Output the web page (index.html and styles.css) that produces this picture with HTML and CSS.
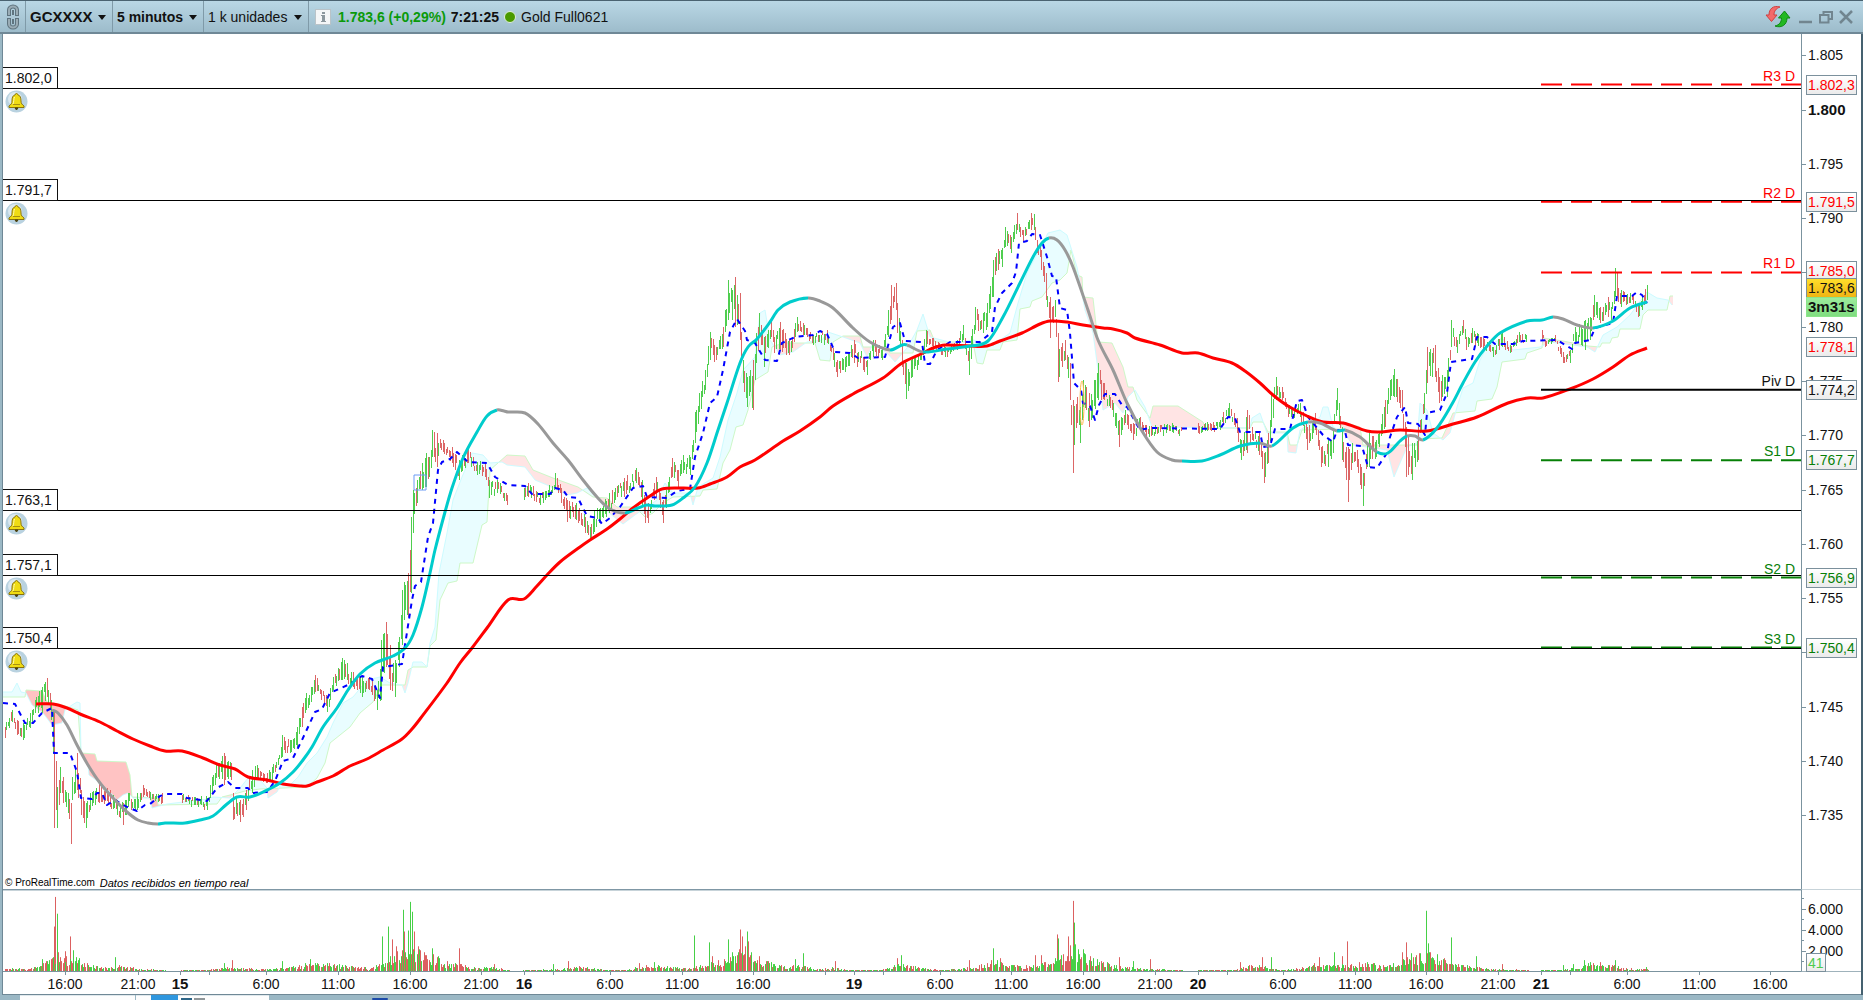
FILE: index.html
```html
<!DOCTYPE html>
<html lang="es">
<head>
    <meta charset="UTF-8">
    <meta name="viewport" content="width=device-width, initial-scale=1.0">
    <title>GCXXXX - 5 minutos</title>
    <link rel="stylesheet" href="styles.css">
</head>
<body>
    <header class="toolbar">
        <button class="link-btn" type="button" aria-label="Vincular ventanas">
            <svg width="14" height="26" viewBox="0 0 14 26" fill="none">
                <path d="M3 12V6a4 3.500 0 0 1 8 0v6M3 14v6a4 3.500 0 0 0 8 0v-6" stroke="#5f747f" stroke-width="4"/>
                <path d="M3 11V6a4 3.500 0 0 1 8 0v5M3 15v5a4 3.500 0 0 0 8 0v-5" stroke="#9aacb5" stroke-width="2"/>
                <path d="M7 6v5M7 15v5" stroke="#5f747f" stroke-width="2"/>
                <path d="M0 13h14" stroke="#abc7d5" stroke-width="2"/>
            </svg>
        </button>
        <div class="picker picker-symbol">
            <select aria-label="Valor"><option>GCXXXX</option></select>
        </div>
        <div class="picker picker-period">
            <select aria-label="Periodo"><option>5 minutos</option></select>
        </div>
        <div class="picker picker-units">
            <select aria-label="Unidades"><option>1 k unidades</option></select>
        </div>
        <button class="info-btn" type="button" aria-label="Información">
            <svg width="16" height="16" viewBox="0 0 16 16">
                <rect x=".5" y=".5" width="15" height="15" fill="#f4f6f7" stroke="#b9c3c8"/>
                <path d="M7 3h3v2H7zM6 6h4v6h1v1H6v-1h1V7H6z" fill="#8b979d"/>
            </svg>
        </button>
        <span class="quote">1.783,6 (+0,29%)</span>
        <span class="clock">7:21:25</span>
        <span class="dot"></span>
        <span class="name">Gold Full0621</span>
        <div class="window-btns">
            <button class="refresh-btn" type="button" aria-label="Actualizar">
                <svg width="26" height="24" viewBox="0 0 26 24">
                    <path d="M15 2C8 0 4 4 4 10H1l5.500 6.500L12 10H9c0-4 2-6.500 6-8z" fill="#f46a6a" stroke="#cf4040"/>
                    <path d="M10 21c7 2.500 12-1.500 12-8h3l-5.500-7-6 7h3c0 4-2 7-6.500 8z" fill="#22b822" stroke="#0f8a12"/>
                </svg>
            </button>
            <button type="button" aria-label="Minimizar">
                <svg width="14" height="14" viewBox="0 0 14 14"><path d="M0 12h13" stroke="#71858f" stroke-width="2.500"/></svg>
            </button>
            <button type="button" aria-label="Restaurar">
                <svg width="14" height="14" viewBox="0 0 14 14" fill="none" stroke="#71858f" stroke-width="2">
                    <path d="M4.500 4V2H13v7h-3"/><path d="M1 5h8.500v7.500H1z"/>
                </svg>
            </button>
            <button type="button" aria-label="Cerrar">
                <svg width="14" height="14" viewBox="0 0 14 14"><path d="M1 1l12 12M13 1L1 13" stroke="#71858f" stroke-width="2.500"/></svg>
            </button>
        </div>
    </header>

    <main class="chart">
        <section class="price-pane" id="pricePane">
            <svg class="plot" id="pricePlot" viewBox="3 34 1798 855" preserveAspectRatio="none"></svg>
            <p class="credit"><span class="brand">© ProRealTime.com</span><i>Datos recibidos en tiempo real</i></p>
        </section>
        <div class="price-axis" id="priceAxis"></div>
        <section class="volume-pane">
            <svg class="plot" id="volumePlot" viewBox="3 890 1798 81" preserveAspectRatio="none"></svg>
        </section>
        <div class="volume-axis" id="volumeAxis"></div>
        <div class="time-axis" id="timeAxis"></div>
        <div class="corner"></div>
    </main>

    <footer class="taskbar">
        <span class="task task-white task-first"></span>
        <span class="task task-white task-small"></span>
        <span class="task task-blue"></span>
        <span class="task task-white task-open"><span class="task-icon"></span><span class="task-icon task-icon-gray"></span></span>
        <span class="task task-dark"></span>
    </footer>

    <script src="chart.js"></script>
</body>
</html>
```
FILE: styles.css
```css
* { box-sizing: border-box; }
body { margin: 0; min-height: 100vh; display: flex; flex-direction: column; font-family: "Liberation Sans", Arial, sans-serif; font-size: 14px; line-height: 16px; color: #111; background: #9bb8c5; }
button { padding: 0; border: none; background: none; cursor: pointer; }
svg { display: block; }

/* toolbar */
.toolbar { display: flex; align-items: center; height: 34px; padding: 0 10px 0 2px; border-top: 1px solid #4a6371; border-bottom: 2px solid #6f8896; background: linear-gradient(#b9d7e5, #9dbccb); white-space: nowrap; }
.toolbar > .link-btn { width: 24px; height: 31px; padding-left: 4px; border-right: 1px solid #7f9aa8; }
.picker { position: relative; height: 31px; border-right: 1px solid #7f9aa8; display: flex; }
.picker select { appearance: none; width: 100%; border: none; background: none; padding: 0 0 0 4px; font-family: inherit; font-size: 14px; color: #111; }
.picker::after { content: ""; position: absolute; right: 6px; top: 14px; border: 4px solid transparent; border-top: 5px solid #111; border-bottom: none; pointer-events: none; }
.picker-symbol { width: 87px; }
.picker-symbol select { font-size: 15px; font-weight: bold; }
.picker-period { width: 91px; }
.picker-period select { font-weight: bold; }
.picker-units { width: 105px; }
.info-btn { margin: 0 7px 0 6px; }
.quote { color: #0a9a0a; font-weight: bold; }
.clock { margin-left: 5px; font-weight: bold; }
.dot { width: 12px; height: 12px; margin: 0 5px; border-radius: 50%; background: #4a9a00; border: 1px solid #e0eedc; }
.window-btns { display: flex; align-items: center; gap: 6px; margin-left: auto; }
.refresh-btn { margin-right: 2px; }

/* chart grid */
.chart { flex: 1; display: grid; grid-template-columns: 1fr 60px; grid-template-rows: 1fr 82px 23px; margin: 0 0 0 2px; border-left: 1px solid #6f8896; border-right: 2px solid #456170; background: #fff; }
.price-pane, .price-axis, .volume-pane, .volume-axis, .time-axis { position: relative; }
.plot { position: absolute; inset: 0; width: 100%; height: 100%; }
.plot path, .plot line, .plot ellipse { vector-effect: non-scaling-stroke; }
.price-pane { border-bottom: 1px solid #7f97a5; }
.price-axis { border-bottom: 1px solid #c7d3d9; border-left: 1px solid #7b939f; }
.volume-pane { border-top: 1px solid #c7d3d9; border-bottom: 1px solid #7b939f; }
.volume-axis { border-left: 1px solid #7b939f; border-bottom: 1px solid #9fb2bb; }
.time-axis { border-bottom: 1px solid #6f8896; }
.corner { border-bottom: 1px solid #6f8896; }
.credit { display: flex; gap: 5px; position: absolute; left: 2px; bottom: 0; margin: 0; font-size: 11px; line-height: 12px; color: #000; }
.credit .brand { font-size: 10px; }

/* alerts and pivots lying over the plot */
.alert { position: absolute; left: 0; width: 100%; border-top: 1px solid #000; }
.alert-price { position: absolute; left: 0; bottom: 0; height: 22px; padding: 2px 5px 0 2px; border: 1px solid #111; border-left: none; background: #fff; }
.alert-bell { position: absolute; left: 2px; top: 1px; }
.pivot-name { position: absolute; right: 6px; padding-bottom: 1px; transform: translateY(-100%); }

/* axes */
.tick { position: absolute; left: 0; width: 4px; border-top: 1px solid #7b939f; }
.tick-minor { width: 2px; }
.tick-label { position: absolute; left: 6px; padding-bottom: 1px; transform: translateY(-50%); }
.tick-strong { font-size: 15px; font-weight: bold; }
.tag { position: absolute; left: 4px; height: 20px; padding: 1px 1px 0 1px; border: 1px solid #7b909c; background: linear-gradient(#fff, #ebebeb); transform: translateY(-50%); }
.tag-volume { height: 19px; top: 63px; color: #4fcb4f; transform: none; }
.red { color: #ff0000; }
.green { color: #078007; }
.dark { color: #111; }
.tag-last { background: linear-gradient(#ffdf2a, #f0b414); }
.tag-timer { border-color: #8be58b; background: linear-gradient(#9cec9c, #80dd80); font-size: 15px; font-weight: bold; }
.time-tick { position: absolute; top: 0; height: 3px; border-left: 1px solid #7b939f; }
.time-label { position: absolute; top: 4px; transform: translateX(-50%); }

/* strip of the desktop bar under the window */
.taskbar { display: flex; height: 5px; background: #9bb8c5; }
.task { height: 5px; }
.task-white { background: #fdfdfd; border-top: 1px solid #dfe8ec; }
.task-first { width: 115px; margin-left: 20px; }
.task-small { width: 15px; margin-left: 1px; }
.task-blue { width: 27px; background: #2f97df; }
.task-open { display: flex; gap: 2px; width: 91px; padding: 2px 0 0 3px; }
.task-icon { width: 11px; background: #2c6587; }
.task-icon-gray { background: #8f9699; }
.task-dark { width: 16px; height: 2px; margin: 3px 0 0 103px; background: #1c4aa8; border-radius: 4px; }
```
FILE: chart.js
```javascript
const NS = "http://www.w3.org/2000/svg";
const VIEW = { x: 3, y: 34, w: 1798, h: 855 };
const pricePlot = document.getElementById("pricePlot");
const volumePlot = document.getElementById("volumePlot");
const pricePane = document.getElementById("pricePane");
const priceAxis = document.getElementById("priceAxis");
const volumeAxis = document.getElementById("volumeAxis");
const timeAxis = document.getElementById("timeAxis");

const priceY = p => 55.3 + (1805 - p) * 10.857;
const topPct = y => ((y - VIEW.y) / VIEW.h * 100) + "%";
const leftPct = x => ((x - VIEW.x) / VIEW.w * 100) + "%";
const points = s => s.trim().split(/\s+/).map(p => p.split(",").map(Number));

// repeatable noise so the chart is the same on each load
let seed = 20210421;
function rnd() {
    seed = (seed * 1664525 + 1013904223) % 4294967296;
    return seed / 4294967296;
}

function add(parent, name, attrs) {
    const el = document.createElementNS(NS, name);
    for (const k in attrs) el.setAttribute(k, attrs[k]);
    parent.appendChild(el);
    return el;
}

function div(parent, cls, text) {
    const el = document.createElement("div");
    el.className = cls;
    if (text) el.textContent = text;
    parent.appendChild(el);
    return el;
}

function stroke(d, color, width, extra) {
    add(pricePlot, "path", Object.assign({
        d: d, fill: "none", stroke: color, "stroke-width": width, "stroke-linejoin": "round"
    }, extra));
}

function line(str, color, width, extra) {
    stroke("M" + str.trim().replace(/\s+/g, "L"), color, width, extra);
}

// rounded line through the points
function curve(pts, from, to, color, width) {
    let d = "M" + pts[from];
    for (let i = from; i < to; i++) {
        const p0 = pts[Math.max(0, i - 1)], p1 = pts[i], p2 = pts[i + 1], p3 = pts[Math.min(pts.length - 1, i + 2)];
        const dx = (p2[0] - p1[0]) / 3;
        const s1 = (p2[1] - p0[1]) / Math.max(1, p2[0] - p0[0]);
        const s2 = (p3[1] - p1[1]) / Math.max(1, p3[0] - p1[0]);
        d += `C${p1[0] + dx},${p1[1] + dx * s1} ${p2[0] - dx},${p2[1] - dx * s2} ${p2[0]},${p2[1]}`;
    }
    stroke(d, color, width);
}

function at(pts, x, col) {
    for (let i = 1; i < pts.length; i++) {
        if (x <= pts[i][0]) {
            const a = pts[i - 1], b = pts[i];
            const t = b[0] === a[0] ? 1 : (x - a[0]) / (b[0] - a[0]);
            return a[col] + (b[col] - a[col]) * t;
        }
    }
    return pts[pts.length - 1][col];
}

// ---- data ----
const spanA = `3,692 12,692 17,683 21,692 26,693 32,705 43,713 52,725 62,723 65,710 72,705 77,702 80,703 81,753
88,765 89,775 100,783 110,792 117,800 123,795 128,793 133,798 150,798 152,808 167,804 207,799 213,797 230,798 240,788
248,778 260,780 267,788 268,798 277,792 282,782 290,785 298,777 307,763 317,753 327,737 333,723 343,703 353,697
367,680 380,677 390,683 402,685 405,693 408,683 413,662 422,662 427,667 430,643 435,627 439,573 447,533 453,500
462,477 472,453 483,455 490,463 502,462 507,465 525,467 535,480 547,485 567,495 577,493 587,488 597,498 608,512
623,524 635,515 647,507 657,500 665,483 673,493 690,493 693,505 698,487 713,478 720,457 728,420 737,393 743,370
755,357 760,313 765,310 770,340 780,355 793,352 807,342 822,340 828,332 843,337 860,343 867,357 873,343 887,353
895,362 907,348 917,330 923,314 930,337 953,343 973,340 993,345 1010,333 1018,303 1027,273 1043,243 1048,233
1060,230 1067,235 1077,267 1085,310 1093,333 1098,370 1103,410 1115,403 1123,413 1128,397 1135,390 1145,407
1152,427 1250,428 1252,418 1260,413 1267,433 1287,433 1288,452 1296,453 1300,430 1320,417 1323,407 1328,407
1333,427 1343,432 1353,445 1373,448 1387,450 1394,477 1400,463 1407,447 1417,443 1420,403 1427,410 1433,433
1443,440 1450,433 1457,407 1463,388 1473,383 1480,360 1487,347 1502,338 1513,350 1540,347 1550,342 1587,347
1595,352 1603,335 1617,327 1630,315 1647,292 1657,298 1668,300 1672,305`;

const spanB = `3,697 25,697 26,690 42,691 47,702 62,705 78,710 81,753 95,754 97,761 126,762 130,775 132,797 157,798
158,805 217,804 222,797 238,793 245,791 260,789 307,787 317,778 325,763 330,743 350,727 360,713 373,702 382,685
405,685 408,670 413,667 427,667 430,646 436,640 440,600 448,583 457,581 460,563 473,563 482,525 487,522 490,470
507,455 525,456 533,470 553,478 578,487 593,497 607,498 617,507 635,507 645,517 653,513 663,503 673,497 700,496
703,490 717,489 723,463 730,450 736,427 743,425 748,410 755,380 768,372 772,347 783,343 815,343 820,360 830,361
833,342 843,336 860,336 863,347 887,347 890,353 913,353 917,331 930,330 935,342 973,342 977,363 983,364 987,350
1000,350 1003,342 1017,340 1020,309 1030,307 1032,301 1042,297 1052,283 1060,280 1067,273 1071,250 1077,275
1082,277 1083,297 1093,298 1098,342 1112,343 1123,367 1128,387 1133,387 1137,400 1150,418 1153,406 1178,406
1203,422 1205,428 1250,428 1253,422 1263,422 1268,432 1287,432 1290,445 1297,445 1302,430 1340,429 1343,422
1360,427 1363,445 1417,445 1420,439 1442,438 1447,427 1453,413 1475,411 1477,401 1492,399 1497,387 1502,362
1525,359 1527,353 1542,348 1543,338 1563,341 1588,346 1600,347 1602,343 1610,343 1612,338 1618,337 1620,329
1640,329 1643,315 1648,310 1667,310 1670,296 1673,296`;

const slowMa = `36,704 53,704 67,708 80,714 100,722 117,731 133,739 150,746 165,751 182,751 203,758 220,765 235,769
248,777 267,780 283,784 300,786 307,786 317,782 333,776 350,766 367,759 383,750 402,739 412,729 420,719 447,683
460,663 472,648 487,628 508,600 524,599 537,586 547,575 560,562 580,547 590,540 607,529 620,519 633,508 650,496
662,489 683,488 698,488 710,484 727,477 740,467 755,460 783,441 800,431 820,417 833,406 853,394 883,378 902,363
923,353 933,348 945,345 970,346 987,346 1000,341 1022,333 1040,324 1050,321 1067,322 1083,325 1103,328 1113,329
1127,333 1135,338 1160,345 1182,353 1198,353 1213,358 1232,363 1245,371 1260,383 1273,395 1288,406 1307,416
1323,422 1343,423 1367,431 1380,432 1400,430 1427,431 1453,424 1477,417 1508,403 1528,398 1543,398 1570,389
1593,379 1613,367 1630,355 1647,348`;

const fastMa = `52,710 58,713 67,725 77,745 88,765 100,783 113,798 127,812 138,820 148,823 158,824 165,823 185,823
200,820 213,816 227,804 237,797 250,797 263,792 280,783 293,772 303,760 312,747 323,727 337,708 348,690 360,674
375,663 393,656 405,648 413,635 422,607 430,573 435,550 445,512 452,488 463,458 477,432 487,416 497,410 504,411
508,412 525,413 538,424 553,443 568,460 583,480 597,497 610,509 625,513 638,508 647,505 655,506 672,505 683,498
695,487 707,463 718,430 727,403 740,363 748,347 757,339 770,322 778,310 790,302 808,298 820,301 833,308 853,328
870,342 890,350 902,345 907,345 923,352 947,349 970,346 988,341 1003,317 1020,283 1033,257 1042,243 1049,238
1057,240 1065,250 1073,267 1088,310 1098,340 1113,370 1127,403 1142,431 1157,452 1172,460 1182,461 1202,461
1220,455 1240,446 1260,443 1272,446 1293,428 1308,422 1320,423 1337,431 1345,430 1360,437 1377,452 1388,453
1400,441 1407,436 1415,436 1423,440 1437,428 1452,404 1463,383 1475,362 1487,346 1500,333 1527,321 1542,320
1553,317 1563,319 1577,325 1593,328 1613,321 1630,308 1647,302`;
// where the fast average turns; it starts falling
const turns = [52, 158, 497, 625, 808, 890, 907, 923, 1049, 1182, 1260, 1272, 1308, 1337, 1345, 1377, 1407, 1423, 1553, 1593, 1647];

const baseLine = `3,703 15,704 25,723 33,723 42,713 52,708 54,753 70,753 77,772 81,798 92,799 97,793 102,793 107,805
115,800 127,807 137,811 145,805 150,804 160,796 167,794 182,794 187,798 207,801 217,788 228,782 235,788 248,788
252,793 267,792 275,781 283,761 293,758 302,740 315,712 322,709 330,693 350,684 362,676 372,679 380,698 383,667
402,664 405,645 412,600 415,586 421,582 428,537 433,523 438,470 442,462 450,459 457,452 468,462 487,463 495,477
508,485 525,486 532,494 550,494 555,488 563,490 568,497 578,498 587,516 598,518 602,524 610,518 620,507 633,488
643,486 647,497 667,498 677,491 690,489 695,457 703,433 710,403 717,397 723,370 730,332 737,319 745,331 747,340
755,343 765,360 777,361 782,343 795,337 813,335 820,331 827,334 835,352 850,353 858,358 885,357 893,327 900,323
905,341 922,342 925,364 930,364 937,350 950,342 980,342 992,332 995,307 1002,293 1012,283 1016,272 1019,243
1027,241 1032,234 1040,235 1047,257 1052,276 1056,277 1060,308 1067,310 1070,333 1074,383 1081,390 1083,403
1090,406 1095,420 1099,405 1105,394 1115,394 1122,405 1127,407 1140,430 1150,428 1220,429 1228,417 1235,418
1240,432 1260,432 1263,447 1270,446 1275,429 1290,429 1297,401 1302,400 1308,417 1323,435 1333,442 1337,430
1345,431 1348,445 1362,446 1368,467 1377,468 1387,453 1390,437 1397,417 1405,407 1408,423 1418,424 1425,435
1427,413 1440,410 1447,393 1451,362 1472,359 1477,337 1487,337 1495,344 1513,344 1523,341 1557,340 1572,349
1575,343 1590,340 1595,328 1613,323 1617,296 1632,296 1637,292 1642,295 1647,303`;

// x,high,low of the price swings, one string per session
const sessions = [
    `5,727,738 12,710,722 17,720,735 23,723,740 30,713,728 35,700,713 42,687,713 47,678,697 52,700,720 54,710,828
    57,787,828 60,767,793 63,777,803 68,793,813 71,803,844 73,777,800 77,753,790 82,790,815 86,803,828 90,793,810
    100,783,803 110,790,807 117,800,815 124,803,825 128,793,807 137,793,810 143,785,797 150,792,800 163,793,803`,
    `182,795,803 207,798,810 212,777,793 217,765,778 224,753,785 231,763,780 233,793,820 240,800,822 247,790,810
    252,770,793 257,765,780 267,773,783 272,767,780 278,758,765 283,735,757 290,740,753 297,727,747 302,707,727
    307,693,710 316,675,692 322,690,700 328,697,712 333,677,690 343,658,680 353,672,687 362,677,697 370,677,690
    377,690,710 381,640,700 386,622,667 390,645,690 395,660,697 399,637,667 403,590,645 404,582,620 408,573,617
    411,517,593 413,490,533 417,480,503 422,463,490 426,453,487 430,457,477 433,430,457 437,433,467 443,440,452
    452,447,463 459,460,480 468,448,463 477,462,475 485,463,477 490,480,498 497,480,493 508,495,505`,
    `524,488,500 529,483,497 540,493,505 550,485,497 555,473,488 562,488,503 568,500,522 577,503,520 585,517,533
    590,527,541 595,510,532 610,493,513 615,488,500 625,478,497 637,468,483 643,480,507 645,500,523 648,503,523
    656,477,497 663,500,523 673,458,477 678,470,487 683,455,473 690,457,475 695,412,443 700,393,412 705,370,390
    710,332,360 715,345,362 723,327,347 728,280,320 732,290,320 735,277,327 740,293,340 743,360,383 747,377,407
    753,360,410 757,333,363 760,313,337 764,337,367 771,322,337 775,337,353 781,322,350 790,340,355 797,317,332
    803,323,335 813,335,345 827,330,343 837,360,377 845,357,372 854,340,363 867,360,375 873,340,357 883,348,360
    888,310,337 892,285,320 896,283,310 898,303,333 902,340,367 906,363,399 912,357,377 922,353,360 926,330,347
    933,338,350 945,347,357 957,340,350 963,325,340 969,347,375 976,307,330 983,313,333 988,303,327 993,260,297
    994,243,277 1002,248,267 1006,227,247 1012,237,253 1017,213,230 1023,230,242 1031,213,230 1034,214,230
    1037,240,253 1042,250,270 1046,273,300 1051,297,338 1055,300,317 1058,333,382 1062,343,367 1066,340,360
    1070,363,400 1073,400,473 1077,397,423 1080,407,443 1084,380,407 1090,393,427 1099,363,400 1105,383,400
    1113,403,417 1119,420,447 1125,410,423 1133,423,440 1140,417,430 1147,425,437 1182,425,434`,
    `1198,423,433 1220,420,430 1229,403,417 1237,418,433 1241,440,460 1247,410,453 1252,427,440 1260,433,455
    1264,453,483 1268,433,463 1272,393,427 1276,377,400 1282,387,400 1288,407,417 1300,403,417 1308,427,450
    1315,413,430 1321,447,467 1328,440,467 1333,430,453 1337,388,410 1342,427,460 1348,447,502 1352,443,463
    1357,450,467 1363,473,506 1369,433,467 1377,440,457 1385,400,427 1390,380,400 1395,369,397 1402,390,413
    1407,427,477 1413,443,480 1418,427,460 1425,393,413 1427,347,383 1435,345,377 1440,377,403 1447,370,397
    1452,320,347 1457,340,353 1463,320,333 1467,337,350 1473,328,343 1483,338,350 1494,347,357 1502,332,347
    1510,345,353 1519,332,342 1527,335,342`,
    `1542,330,340 1545,340,347 1555,335,342 1563,352,363 1570,350,363 1575,327,343 1585,320,350 1590,317,340
    1595,295,317 1600,307,323 1608,297,317 1611,307,320 1616,268,297 1622,290,307 1630,293,303 1638,303,317
    1643,297,310 1647,285,300`
];

// ---- cloud ----
const a = points(spanA), b = points(spanB);
const cloud = { rise: "", fall: "", fallEarly: "" };
for (let x = 3; x < 1673; x++) {
    const a1 = at(a, x, 1), b1 = at(b, x, 1), a2 = at(a, x + 1, 1), b2 = at(b, x + 1, 1);
    const key = a1 <= b1 ? "rise" : (x < 165 ? "fallEarly" : "fall");
    cloud[key] += `M${x},${a1}L${x + 1},${a2} ${x + 1},${b2} ${x},${b1}Z`;
}
add(pricePlot, "path", { d: cloud.rise, fill: "#e9fdff", "shape-rendering": "crispEdges" });
add(pricePlot, "path", { d: cloud.fall, fill: "#ffe4e4", "shape-rendering": "crispEdges" });
add(pricePlot, "path", { d: cloud.fallEarly, fill: "#ffc3c3", "shape-rendering": "crispEdges" });
line(spanB, "#cdf8c8", 1);
line(spanA, "#cdfbff", 1);

// ---- bars ----
const bars = { up: "", down: "" };
sessions.forEach(str => {
    const s = points(str);
    let next = 0;
    for (let x = s[0][0]; x <= s[s.length - 1][0]; x += 1.5) {
        const hi = at(s, x, 1), lo = at(s, x, 2), range = lo - hi;
        let top, bottom;
        if (x + 0.7 >= s[next][0]) {
            top = s[next][1];
            bottom = s[next][2];
            while (next < s.length - 1 && x + 0.7 >= s[next][0]) next++;
        } else {
            const size = range * (0.35 + rnd() * 0.55);
            top = hi + (range - size) * rnd() + (rnd() - 0.5) * 4;
            bottom = top + size;
        }
        const slope = at(s, x + 3, 1) - at(s, x - 3, 1);
        const up = rnd() < (slope < -3 ? 0.8 : slope > 3 ? 0.22 : 0.5);
        bars[up ? "up" : "down"] += `M${Math.floor(x) + 0.5},${Math.round(top)}V${Math.round(bottom)}`;
    }
});
add(pricePlot, "path", { d: bars.down, stroke: "#dc6666", "stroke-width": 1 });
add(pricePlot, "path", { d: bars.up, stroke: "#4fce4f", "stroke-width": 1 });

// ---- indicator lines ----
line(baseLine, "#0000ff", 2, { "stroke-dasharray": "5 5" });
const slow = points(slowMa), fast = points(fastMa);
curve(slow, 0, slow.length - 1, "#ff0000", 3);
for (let i = 1; i < turns.length; i++) {
    const from = fast.findIndex(p => p[0] === turns[i - 1]);
    const to = fast.findIndex(p => p[0] === turns[i]);
    curve(fast, from, to, i % 2 ? "#999999" : "#00cccc", 3);
}
add(pricePlot, "path", { d: "M414,475H426V490H414Z", fill: "none", stroke: "#6c9cf5" });
add(pricePlot, "ellipse", { cx: 1082, cy: 403, rx: 2, ry: 22, fill: "none", stroke: "#ffb84d" });

// ---- pivots ----
const pivots = [
    ["R3 D", 1802.3, "red"], ["R2 D", 1791.5, "red"], ["R1 D", 1785, "red"], ["Piv D", 1774.2, "dark"],
    ["S1 D", 1767.7, "green"], ["S2 D", 1756.9, "green"], ["S3 D", 1750.45, "green"]
];
const pivotColor = { red: "#ff0000", green: "#078007", dark: "#000000" };
pivots.forEach(([name, price, cls]) => {
    const y = priceY(price);
    add(pricePlot, "line", {
        x1: 1541, x2: 1801, y1: y, y2: y, stroke: pivotColor[cls], "stroke-width": 2,
        "stroke-dasharray": cls === "dark" ? "none" : "21 9"
    });
    div(pricePane, "pivot-name " + cls, name).style.top = topPct(y);
});

// ---- alerts ----
const bell = `<svg width="23" height="23" viewBox="0 0 23 23">
<circle cx="11.500" cy="11.500" r="11" fill="#b9d2e0"/><circle cx="10" cy="9" r="7" fill="#dbe8ef"/>
<path d="M11.500 3.500c-.8 0-1.300.5-1.300 1.300C7.500 5.500 7 8 7 11c0 2.500-1 3.500-3 5v1.500h15V16c-2-1.500-3-2.500-3-5 0-3-.5-5.500-3.200-6.200 0-.8-.5-1.300-1.300-1.300z" fill="#f0dc14" stroke="#8a7410"/>
<path d="M9.500 7c-1 2-.5 5-1.500 7" stroke="#fffbb0" fill="none"/><path d="M8 14.500h7" stroke="#a89010"/>
<path d="M10 18h3l-1.500 2z" fill="#4a4210" stroke="#4a4210"/></svg>`;
[["1.802,0", 1802], ["1.791,7", 1791.7], ["1.763,1", 1763.1], ["1.757,1", 1757.1], ["1.750,4", 1750.4]].forEach(([text, price]) => {
    const row = div(pricePane, "alert");
    row.style.top = topPct(priceY(price));
    div(row, "alert-price", text);
    div(row, "alert-bell").innerHTML = bell;
});

// ---- price axis ----
for (let p = 1735; p <= 1805; p += 5) {
    div(priceAxis, "tick").style.top = topPct(priceY(p));
    // these two sit behind a tag
    if (p === 1750 || p === 1785) continue;
    const label = div(priceAxis, "tick-label" + (p === 1800 ? " tick-strong" : ""), "1." + (p - 1000));
    label.style.top = topPct(priceY(p));
}
[
    ["1.802,3", 1802.3, "red"], ["1.791,5", 1791.5, "red"], ["1.785,0", 1785.1, "red"], ["1.783,6", 1783.6, "tag-last"],
    ["3m31s", 1781.8, "tag-timer"], ["1.778,1", 1778.1, "red"], ["1.774,2", 1774.2, "dark"],
    ["1.767,7", 1767.7, "green"], ["1.756,9", 1756.9, "green"], ["1.750,4", 1750.4, "green"]
].forEach(([text, price, cls]) => {
    div(priceAxis, "tag " + cls, text).style.top = topPct(priceY(price));
});

// ---- volume ----
// x,average height
const level = points(`5,2 30,2 42,6 50,10 60,18 66,13 78,12 90,5 110,3 118,5 140,2 163,1 182,1 205,1 225,3 250,2 275,2
295,4 310,7 330,6 355,4 370,3 380,6 395,16 408,24 420,19 436,14 445,5 457,7 470,3 500,3 508,1 524,1 560,2 580,4
605,1 625,1 640,4 655,6 665,4 690,3 705,7 725,10 735,17 745,22 755,13 768,8 785,4 800,5 815,2 838,3 845,1 880,1
895,5 905,7 920,3 940,1 960,2 980,5 995,10 1010,6 1030,4 1050,9 1065,15 1075,20 1090,12 1105,8 1120,4 1150,2
1180,1 1198,1 1235,1 1250,5 1262,5 1280,1 1300,3 1315,7 1330,5 1350,6 1365,8 1380,5 1398,7 1410,14 1425,16
1440,12 1455,6 1470,5 1485,2 1527,1 1542,1 1560,1 1580,3 1590,7 1600,5 1616,5 1625,2 1647,2`);
// x,height,up
const spikes = points(`42,12,1 54,45,0 55,75,0 57,58,1 65,20,0 70,35,0 73,21,1 115,14,1 224,8,1 232,11,0 282,10,1
310,12,1 382,35,1 388,45,1 392,32,0 396,25,0 403,62,1 404,40,0 408,41,1 410,70,1 412,60,1 414,40,0 419,22,1
432,23,1 447,10,0 459,23,0 494,7,0 553,7,1 568,10,0 639,8,0 654,9,1 694,36,1 709,29,1 712,15,0 728,32,1 740,42,0
742,35,0 747,40,1 748,30,0 795,12,1 803,18,1 835,10,0 897,13,0 901,16,1 969,11,0 993,23,1 1000,13,0 1035,16,0
1041,16,0 1057,37,0 1058,33,1 1068,35,0 1070,26,0 1073,71,0 1074,49,1 1075,27,1 1083,22,1 1119,14,0 1133,10,1
1150,12,0 1240,9,0 1262,14,0 1271,14,1 1319,14,0 1334,19,1 1342,15,0 1347,30,0 1406,29,0 1402,19,0 1411,18,1
1420,18,1 1426,61,1 1428,28,1 1430,19,0 1451,34,1 1476,15,1 1502,7,0 1563,6,1 1573,7,1 1584,11,1 1600,9,0
1615,11,1 1646,4,1`);
const vol = { up: "", down: "" };
for (let x = 5; x < 1648; x += 1.2) {
    if ((x > 165 && x < 181) || (x > 509 && x < 523) || (x > 1183 && x < 1197) || (x > 1528 && x < 1541)) continue;
    const h = Math.max(1, Math.round(at(level, x, 1) * (0.4 + rnd() * 0.9)));
    vol[rnd() < 0.5 ? "up" : "down"] += `M${Math.round(x) + 0.5},971V${971 - h}`;
}
spikes.forEach(([x, h, up]) => { vol[up ? "up" : "down"] += `M${x + 0.5},971V${971 - h}`; });
add(volumePlot, "path", { d: vol.down, stroke: "#dc6060" });
add(volumePlot, "path", { d: vol.up, stroke: "#46d046" });

[["", 8], ["6.000", 19], ["", 29], ["4.000", 40], ["", 50], ["2.000", 61], ["", 71]].forEach(([text, y]) => {
    div(volumeAxis, "tick" + (text ? "" : " tick-minor")).style.top = y + "px";
    if (text) div(volumeAxis, "tick-label", text).style.top = y + "px";
});
div(volumeAxis, "tag tag-volume", "41");

// ---- time axis ----
[
    ["16:00", 65], ["21:00", 138], ["15", 180], ["", 209], ["6:00", 266], ["11:00", 338], ["16:00", 410], ["21:00", 481],
    ["16", 524], ["", 553], ["6:00", 610], ["11:00", 682], ["16:00", 753], ["", 825], ["19", 854], ["", 883],
    ["6:00", 940], ["11:00", 1011], ["16:00", 1083], ["21:00", 1155], ["20", 1198], ["", 1227], ["6:00", 1283],
    ["11:00", 1355], ["16:00", 1426], ["21:00", 1498], ["21", 1541], ["", 1570], ["6:00", 1627], ["11:00", 1699], ["16:00", 1770]
].forEach(([text, x]) => {
    div(timeAxis, "time-tick").style.left = leftPct(x);
    if (text) div(timeAxis, "time-label" + (text.includes(":") ? "" : " tick-strong"), text).style.left = leftPct(x);
});
```
